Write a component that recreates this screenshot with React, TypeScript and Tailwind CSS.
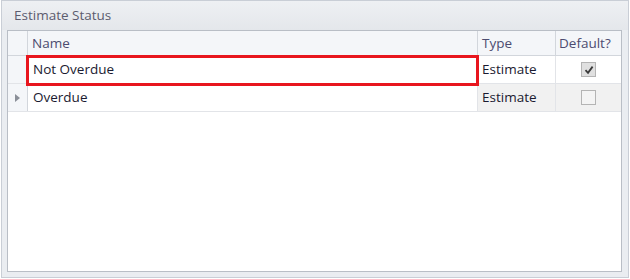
const font = { fontFamily: '"Open Sans", "Noto Sans", sans-serif' };

function Check({ checked }: { checked: boolean }) {
  return (
    <div
      className={`w-[15px] h-[15px] border border-[#b4b4b4] ${checked ? 'bg-[#e0e0e0]' : 'bg-[#f4f4f4]'} flex items-center justify-center`}
    >
      {checked && (
        <svg width="10" height="10" viewBox="0 0 10 10">
          <path d="M1.5 5.2 L4 7.8 L8.6 1.6" fill="none" stroke="#3a3a3a" strokeWidth="1.8" />
        </svg>
      )}
    </div>
  );
}

const rows = [
  { name: 'Not Overdue', type: 'Estimate', def: true, current: false },
  { name: 'Overdue', type: 'Estimate', def: false, current: true },
];

export default function App() {
  return (
    <div className="w-[630px] h-[279px] bg-white" style={font}>
      <div className="ml-[1px] w-[628px] h-[278px] border border-[#c9ced6] bg-[#eaedf1] flex flex-col">
        <div className="h-[29px] pl-[12px] flex items-center text-[13.5px] text-[#5c5c6e] bg-gradient-to-b from-[#eef0f3] to-[#e4e7eb]">
          Estimate Status
        </div>
        <div className="relative ml-[5px] w-[615px] h-[242px] border border-[#b9bec6] bg-white">
          <div className="flex h-[25px] border-b border-[#d2d6dc] bg-[#f4f6f9] text-[13.5px] text-[#4c4c70]">
            <div className="w-[20px] border-r border-[#d2d6dc]" />
            <div className="w-[450px] border-r border-[#d2d6dc] pl-[4px] flex items-center">Name</div>
            <div className="w-[78px] border-r border-[#d2d6dc] pl-[4px] flex items-center">Type</div>
            <div className="flex-1 pl-[3px] flex items-center">Default?</div>
          </div>
          {rows.map((r) => (
            <div key={r.name} className="flex h-[28px] border-b border-[#e2e4e8] text-[13.5px] text-[#1a1a30]">
              <div className="w-[20px] border-r border-[#d2d6dc] bg-[#f4f6f9] flex items-center justify-center">
                {r.current && (
                  <svg width="5" height="8" viewBox="0 0 5 8">
                    <path d="M0 0 L5 4 L0 8 Z" fill="#8a8f98" />
                  </svg>
                )}
              </div>
              <div className="w-[450px] border-r border-[#e2e4e8] pl-[5px] flex items-center">{r.name}</div>
              <div
                className={`w-[78px] border-r border-[#e2e4e8] pl-[4px] flex items-center ${r.current ? 'bg-[#f1f1f1]' : ''}`}
              >
                {r.type}
              </div>
              <div className={`flex-1 flex items-center justify-center ${r.current ? 'bg-[#f1f1f1]' : ''}`}>
                <Check checked={r.def} />
              </div>
            </div>
          ))}
          <div className="absolute left-[18px] top-[24px] w-[453px] h-[31px] border-[3px] border-[#e8161e] pointer-events-none" />
        </div>
      </div>
    </div>
  );
}
